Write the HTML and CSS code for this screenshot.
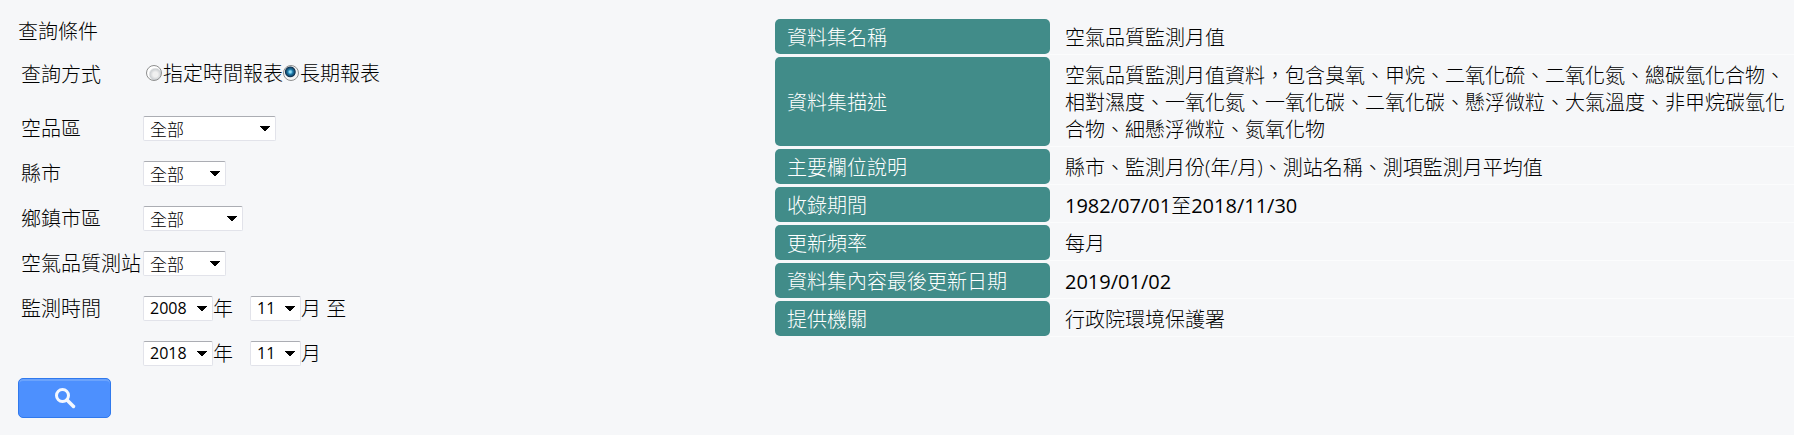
FILE: index.html
```html
<!DOCTYPE html>
<html lang="zh-Hant">
<head>
<meta charset="utf-8">
<title>空氣品質監測月值</title>
<link rel="stylesheet" href="styles.css">
</head>
<body>
<main class="page">
  <form class="query" onsubmit="return false">
    <h1 class="query-title">查詢條件</h1>
    <div class="row row-mode" role="radiogroup" aria-labelledby="mode">
      <span class="name" id="mode">查詢方式</span>
      <div class="modes">
        <label class="mode"><input class="radio" type="radio" name="mode">指定時間報表</label>
        <label class="mode"><input class="radio" type="radio" name="mode" checked>長期報表</label>
      </div>
    </div>
    <div class="row">
      <label class="name" for="area">空品區</label>
      <select class="select select-l" id="area"><option>全部</option></select>
    </div>
    <div class="row">
      <label class="name" for="county">縣市</label>
      <select class="select select-s" id="county"><option>全部</option></select>
    </div>
    <div class="row">
      <label class="name" for="town">鄉鎮市區</label>
      <select class="select select-m" id="town"><option>全部</option></select>
    </div>
    <div class="row">
      <label class="name" for="site">空氣品質測站</label>
      <select class="select select-s" id="site"><option>全部</option></select>
    </div>
    <div class="row">
      <span class="name">監測時間</span>
      <label class="unit unit-year"><select class="select select-year"><option>2008</option></select>年</label>
      <label class="unit"><select class="select select-month"><option>11</option></select>月 至</label>
    </div>
    <div class="row">
      <span class="name"></span>
      <label class="unit unit-year"><select class="select select-year"><option>2018</option></select>年</label>
      <label class="unit"><select class="select select-month"><option>11</option></select>月</label>
    </div>
    <button class="search" type="submit" aria-label="查詢">
      <svg width="22" height="22" viewBox="0 0 22 22" fill="none" stroke="#f4f8ff" stroke-linecap="round"><circle cx="8.500" cy="8.500" r="6" stroke-width="3"/><path d="M13 13l6.500 6.500" stroke-width="3.500"/></svg>
    </button>
  </form>
  <table class="info">
    <tbody>
      <tr><th scope="row">資料集名稱</th><td>空氣品質監測月值</td></tr>
      <tr><th scope="row">資料集描述</th><td>空氣品質監測月值資料，包含臭氧、甲烷、二氧化硫、二氧化氮、總碳氫化合物、相對濕度、一氧化氮、一氧化碳、二氧化碳、懸浮微粒、大氣溫度、非甲烷碳氫化合物、細懸浮微粒、氮氧化物</td></tr>
      <tr><th scope="row">主要欄位說明</th><td>縣市、監測月份(年/月)、測站名稱、測項監測月平均值</td></tr>
      <tr><th scope="row">收錄期間</th><td><time>1982/07/01</time>至<time>2018/11/30</time></td></tr>
      <tr><th scope="row">更新頻率</th><td>每月</td></tr>
      <tr><th scope="row">資料集內容最後更新日期</th><td><time>2019/01/02</time></td></tr>
      <tr><th scope="row">提供機關</th><td>行政院環境保護署</td></tr>
    </tbody>
  </table>
</main>
</body>
</html>
```
FILE: styles.css
```css
* { box-sizing: border-box; }
body {
  margin: 0;
  background: #f6f7f9;
  color: #000;
  font: 300 20px/27px "Open Sans", "Noto Sans CJK TC", sans-serif;
}
.page {
  display: grid;
  grid-template-columns: 432fr 568fr;
  align-items: start;
}
.query { padding: 18px 0 17px 18px; }
.query-title {
  margin: 0 0 7px;
  font-size: 20px;
  font-weight: 300;
}
.row {
  display: flex;
  align-items: center;
  height: 45px;
  padding-left: 3px;
}
.row-mode { margin-bottom: 9px; }
.name { width: 122px; white-space: nowrap; }
.modes { display: flex; padding: 0 0 3px 3px; }
.mode { display: flex; align-items: center; }
.radio {
  appearance: none;
  width: 16px;
  height: 16px;
  margin: 0 1px 0 0;
  border: 1px solid #8e8f8f;
  border-radius: 50%;
  background: radial-gradient(circle at 60% 60%, #f0f0f0 0 20%, #cdd0d3 45%, #fff 58%);
}
.radio:checked {
  background: radial-gradient(circle at 45% 42%, #8fdcf5 0 8%, #1e7fb0 22%, #10314e 44%, #f4f4f4 52%);
}
.select {
  appearance: none;
  height: 25px;
  padding: 0 6px;
  border: 1px solid #e2e3ea;
  border-top-color: #abadb3;
  border-radius: 2px;
  background-color: #fff;
  background-image: linear-gradient(to top right, transparent 50%, #000 50%), linear-gradient(to top left, transparent 50%, #000 50%);
  background-repeat: no-repeat;
  background-size: 5px 6px;
  background-position: right 10px top 9px, right 5px top 9px;
  color: #000;
  font: 300 17px/23px "Noto Sans CJK TC", sans-serif;
}
.select-l { width: 133px; }
.select-m { width: 100px; }
.select-s { width: 83px; }
.select-year, .select-month { font: 400 16px/23px "Open Sans", sans-serif; }
.select-year { width: 70px; }
.select-month { width: 51px; }
.unit { display: flex; align-items: center; }
.unit-year { width: 107px; }
.search {
  display: flex;
  align-items: center;
  justify-content: center;
  width: 93px;
  height: 40px;
  margin-top: 2px;
  padding: 0;
  border: 1px solid #3079ed;
  border-radius: 5px;
  background: #4d90fe;
  box-shadow: inset 0 2px 0 #6ba3fc;
}
.info {
  width: 100%;
  padding-top: 16px;
  border-spacing: 0 3px;
  border-collapse: separate;
}
.info th {
  width: 275px;
  padding: 5px 12px 3px;
  border-radius: 5px;
  background: #418c89;
  color: #fff;
  font-weight: 300;
  text-align: left;
}
.info td {
  padding: 5px 8px 3px 15px;
  box-shadow: 0 1px 0 #fbfcfd;
}
.info time { font-weight: 400; }
```
